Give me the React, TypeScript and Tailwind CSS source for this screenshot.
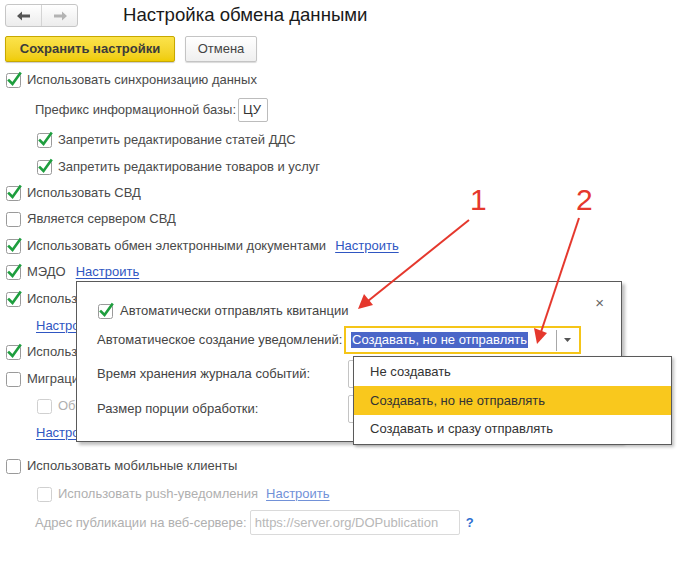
import React from "react";

type CheckProps = { checked?: boolean; disabled?: boolean };

function Check({ checked = false, disabled = false }: CheckProps) {
  return (
    <svg width="16" height="16" viewBox="0 0 16 16" className="shrink-0 overflow-visible">
      <rect
        x="0.5"
        y="1.5"
        width="14"
        height="14"
        rx="2"
        fill="white"
        stroke={disabled ? "#d0d0d0" : "#9a9a9a"}
      />
      {checked && (
        <path d="M3 8.5 L6.5 12 L14 1.5" fill="none" stroke="#1e9e3e" strokeWidth="2.6" strokeLinecap="square" />
      )}
    </svg>
  );
}

function Row({
  h,
  indent = 0,
  clip = false,
  children,
}: {
  h: string;
  indent?: number;
  clip?: boolean;
  children: React.ReactNode;
}) {
  // rows that sit under the popup are cut at its left edge
  return (
    <div
      className={`flex items-center gap-[5px] whitespace-nowrap ${h} ${clip ? "w-[70px] overflow-hidden" : ""}`}
      style={{ paddingLeft: indent }}
    >
      {children}
    </div>
  );
}

const link = "text-[#2f56c2] underline underline-offset-2";

export default function App() {
  return (
    <div
      className="relative w-[687px] h-[574px] overflow-hidden bg-white text-[13px] text-[#4a4a4a]"
      style={{ fontFamily: '"Liberation Sans", Arial, sans-serif' }}
    >
      {/* header */}
      <div className="flex items-center h-[28px] pt-[3px] pl-[5px]">
        <div className="flex h-[23px] w-[73px] rounded-[3px] border border-[#c6c6c6] bg-gradient-to-b from-white to-[#ececec]">
          <div className="flex flex-1 items-center justify-center border-r border-[#d4d4d4]">
            <svg width="14" height="10" viewBox="0 0 14 10">
              <path d="M0 5 L5 0.5 L5 3.5 L13 3.5 L13 6.5 L5 6.5 L5 9.5 Z" fill="#555" />
            </svg>
          </div>
          <div className="flex flex-1 items-center justify-center">
            <svg width="14" height="10" viewBox="0 0 14 10">
              <path d="M14 5 L9 0.5 L9 3.5 L1 3.5 L1 6.5 L9 6.5 L9 9.5 Z" fill="#b3b3b3" />
            </svg>
          </div>
        </div>
        <h1 className="ml-[45px] text-[18.6px] leading-none text-[#1a1a1a]">Настройка обмена данными</h1>
      </div>

      {/* buttons */}
      <div className="flex gap-[10px] pl-[5px] mt-[8px]">
        <button className="h-[26px] w-[170px] rounded-[2px] border border-[#c7a800] bg-gradient-to-b from-[#fbe34a] to-[#efcc00] font-bold text-[#3b3b3b] shadow-[0_1px_1px_rgba(0,0,0,0.2)]">
          Сохранить настройки
        </button>
        <button className="h-[26px] w-[72px] rounded-[2px] border border-[#c4c4c4] bg-gradient-to-b from-white to-[#efefef] text-[#444] shadow-[0_1px_1px_rgba(0,0,0,0.15)]">
          Отмена
        </button>
      </div>

      {/* settings list */}
      <div className="flex flex-col pl-[6px] mt-[5px]">
        <Row h="h-[26px]">
          <Check checked />
          <span>Использовать синхронизацию данных</span>
        </Row>
        <div className="flex items-center h-[32px] pl-[29px] gap-[2px] mt-[1px]">
          <span>Префикс информационной базы:</span>
          <div className="flex items-center h-[24px] w-[30px] rounded-[2px] border border-[#bcbcbc] pl-[4px] text-[#333]">
            ЦУ
          </div>
        </div>
        <Row h="h-[28px]" indent={31}>
          <Check checked />
          <span>Запретить редактирование статей ДДС</span>
        </Row>
        <Row h="h-[26px]" indent={31}>
          <Check checked />
          <span>Запретить редактирование товаров и услуг</span>
        </Row>
        <Row h="h-[26px]">
          <Check checked />
          <span>Использовать СВД</span>
        </Row>
        <Row h="h-[26px]">
          <Check />
          <span>Является сервером СВД</span>
        </Row>
        <Row h="h-[27px]">
          <Check checked />
          <span>Использовать обмен электронными документами</span>
          <span className={`${link} ml-[4px]`}>Настроить</span>
        </Row>
        <Row h="h-[26px]">
          <Check checked />
          <span>МЭДО</span>
          <span className={`${link} ml-[5px]`}>Настроить</span>
        </Row>
        <Row h="h-[27px]" clip>
          <Check checked />
          <span>Использовать обмен с контрагентами</span>
        </Row>
        <Row h="h-[27px]" indent={30} clip>
          <span className={link}>Настроить</span>
        </Row>
        <Row h="h-[26px]" clip>
          <Check checked />
          <span>Использовать интеграцию</span>
        </Row>
        <Row h="h-[27px]" clip>
          <Check />
          <span>Миграция приложений</span>
        </Row>
        <Row h="h-[27px]" indent={31} clip>
          <Check disabled />
          <span className="text-[#b0b0b0]">Обмен данными</span>
        </Row>
        <Row h="h-[27px]" indent={30} clip>
          <span className={link}>Настроить</span>
        </Row>
        <div className="mt-[6px]">
          <Row h="h-[27px]">
            <Check />
            <span>Использовать мобильные клиенты</span>
          </Row>
        </div>
        <Row h="h-[29px]" indent={31}>
          <Check disabled />
          <span className="text-[#b0b0b0]">Использовать push-уведомления</span>
          <span className="ml-[3px] text-[#7191d8] underline underline-offset-2">Настроить</span>
        </Row>
        <div className="flex items-center h-[29px] pl-[29px] gap-[3px]">
          <span className="text-[#b0b0b0]">Адрес публикации на веб-сервере:</span>
          <div className="flex items-center h-[25px] w-[210px] rounded-[2px] border border-[#dadada] pl-[4px] text-[#b8b8b8]">
            https://server.org/DOPublication
          </div>
          <span className="ml-[3px] font-bold text-[#2f6fd0]">?</span>
        </div>
      </div>

      {/* popup form */}
      <div className="absolute left-[76px] top-[281px] w-[546px] h-[161px] border border-[#5a5a5a] bg-white shadow-[3px_3px_3px_rgba(0,0,0,0.25)] text-[#444]">
        <span className="absolute right-[17px] top-[13px] text-[15px] leading-none text-[#666]">×</span>
        <div className="flex flex-col pl-[20px] pt-[19px]">
          <div className="flex items-center gap-[6px] h-[20px] pl-[1px]">
            <Check checked />
            <span>Автоматически отправлять квитанции</span>
          </div>
          <div className="flex items-center h-[28px] mt-[5px]">
            <span className="w-[247px]">Автоматическое создание уведомлений:</span>
            <div className="flex items-center h-[28px] w-[237px] border-2 border-[#f5c518] pl-[5px]">
              <span className="bg-[#4a66c8] text-white leading-[16px] px-[1px]">Создавать, но не отправлять</span>
              <div className="ml-auto flex h-[21px] items-center border-l border-[#a8a8a8] pl-[7px] pr-[8px]">
                <svg width="7" height="4" viewBox="0 0 7 4">
                  <path d="M0 0 L7 0 L3.5 4 Z" fill="#555" />
                </svg>
              </div>
            </div>
          </div>
          <div className="flex items-center h-[28px] mt-[6px]">
            <span className="w-[251px]">Время хранения журнала событий:</span>
            <div className="h-[28px] w-[120px] rounded-[2px] border border-[#c4c4c4]" />
          </div>
          <div className="flex items-center h-[28px] mt-[7px]">
            <span className="w-[251px]">Размер порции обработки:</span>
            <div className="h-[28px] w-[120px] rounded-[2px] border border-[#c4c4c4]" />
          </div>
        </div>
      </div>

      {/* dropdown list */}
      <div className="absolute left-[353px] top-[356px] w-[319px] h-[89px] border border-[#5a5a5a] bg-white shadow-[2px_2px_3px_rgba(0,0,0,0.25)] flex flex-col py-[1px] text-[#333]">
        <div className="flex items-center h-[29px] pl-[16px]">Не создавать</div>
        <div className="flex items-center h-[29px] pl-[16px] bg-[#f9c81d]">Создавать, но не отправлять</div>
        <div className="flex items-center h-[29px] pl-[16px]">Создавать и сразу отправлять</div>
      </div>

      {/* annotations */}
      <svg className="absolute inset-0 pointer-events-none" width="687" height="574" viewBox="0 0 687 574">
        <text x="470" y="210" fontSize="30" fill="#e5382d" fontFamily='"Liberation Sans", Arial, sans-serif'>
          1
        </text>
        <text x="576" y="210" fontSize="30" fill="#e5382d" fontFamily='"Liberation Sans", Arial, sans-serif'>
          2
        </text>
        <line x1="469" y1="220" x2="368" y2="301" stroke="#e5382d" strokeWidth="2" />
        <path d="M358 309 L364 294 L373 305 Z" fill="#e5382d" />
        <line x1="579" y1="218" x2="541" y2="332" stroke="#e5382d" strokeWidth="2" />
        <path d="M537 344 L534 328 L547 333 Z" fill="#e5382d" />
      </svg>
    </div>
  );
}
